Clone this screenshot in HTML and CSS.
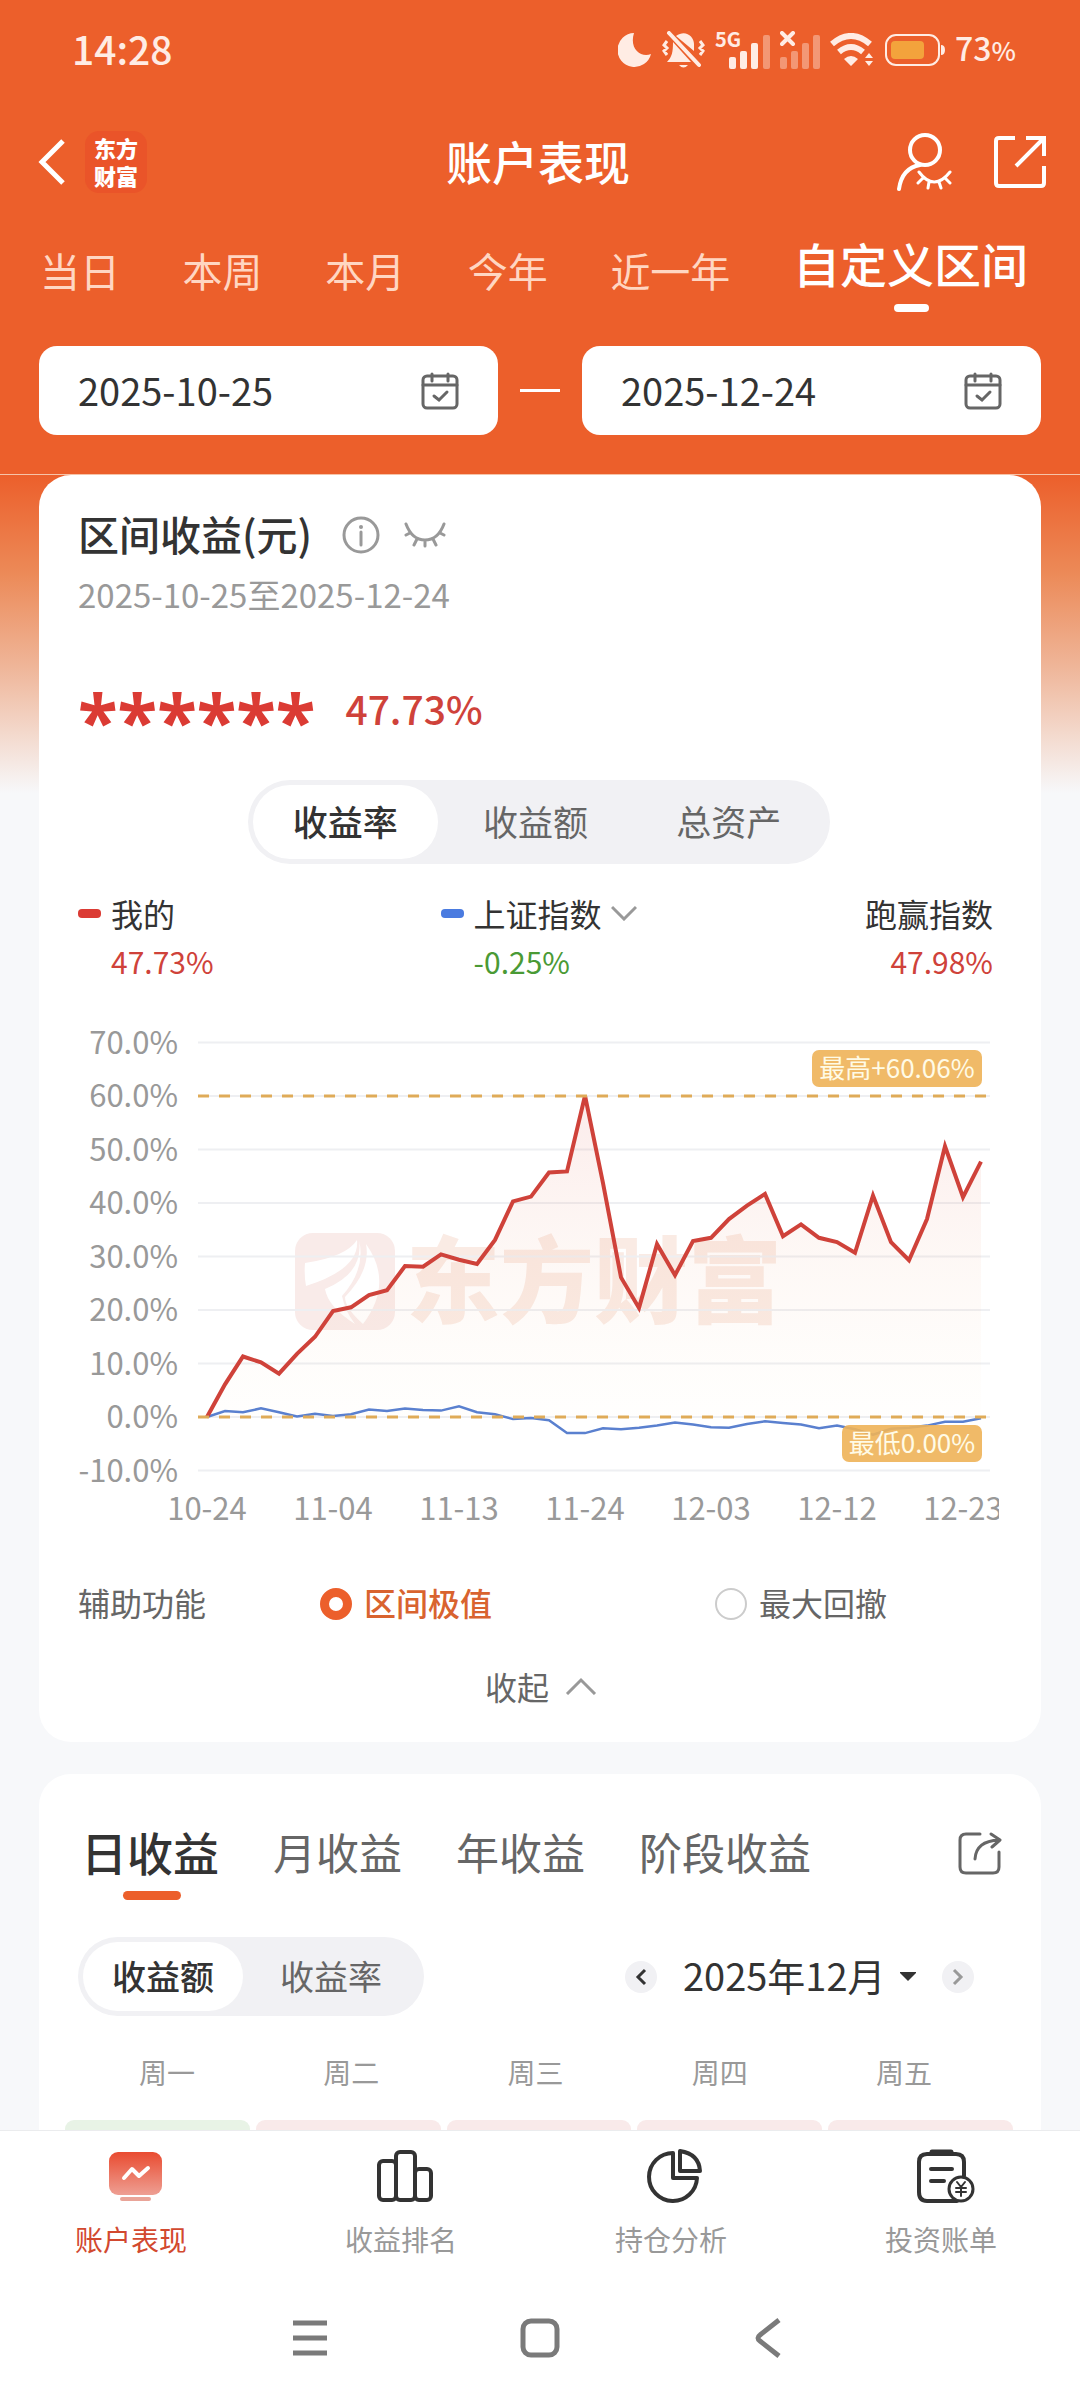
FILE: index.html
```html
<!DOCTYPE html>
<html lang="zh-CN">
  <head>
    <meta charset="UTF-8" />
    <meta name="viewport" content="width=device-width, initial-scale=1" />
    <title>账户表现</title>
    <link rel="stylesheet" href="styles.css">
  </head>
  <body>
    <div class="app">
      <header class="header">
        <div class="status-bar">
          <span class="clock">14:28</span>
          <div class="status-icons">
            <svg width="34" height="36" viewBox="0 0 34 36"><path d="M16 1A17 17 0 1 0 33 22C23 26 11 17 16 1Z" fill="#ffece4"/></svg>
            <svg width="43" height="38" viewBox="0 0 43 38" fill="#ffece4">
              <path d="M14 5C23-2 32 5 32 13V20ZM11 11L29 31H5C10 26 11 21 11 11ZM17 34h9q-4.500 5-9 0Z"/>
              <path d="M7 2L37 34" stroke="#ffece4" stroke-width="4" stroke-linecap="round"/>
              <path d="M5 10l-3 4 3 3-3 3 3 4M38 10l3 4-3 3 3 3-3 4" fill="none" stroke="#ffece4" stroke-width="3"/>
            </svg>
            <svg class="signal" width="55" height="38" viewBox="0 0 55 38" fill="#ffece4">
              <text x="0" y="16" class="net-label">5G</text>
              <rect x="14" y="26" width="7" height="12" rx="2"/><rect x="25" y="20" width="7" height="18" rx="2"/><rect x="36" y="12" width="7" height="26" rx="2"/><rect x="48" y="4" width="7" height="34" rx="2" opacity=".4"/>
            </svg>
            <svg width="40" height="38" viewBox="0 0 40 38" fill="#ffece4">
              <path d="M2 2l11 11M13 2L2 13" stroke="#ffece4" stroke-width="4" stroke-linecap="round"/>
              <g opacity=".4"><rect y="26" width="7" height="12" rx="2"/><rect x="11" y="20" width="7" height="18" rx="2"/><rect x="22" y="12" width="7" height="26" rx="2"/><rect x="33" y="4" width="7" height="34" rx="2"/></g>
            </svg>
            <svg width="45" height="34" viewBox="0 0 45 34">
              <path d="M2 11Q21-5 40 11M9 19Q21 9 33 19" fill="none" stroke="#ffece4" stroke-width="6"/>
              <path d="M14 26q7-6 14 0l-7 7ZM35 25l4-5 4 5ZM35 28h8l-4 5Z" fill="#ffece4"/>
            </svg>
            <svg width="60" height="32" viewBox="0 0 60 32">
              <rect x="1" y="1" width="53" height="30" rx="10" fill="none" stroke="#ffece4" stroke-width="2"/>
              <rect x="6" y="7" width="33" height="18" rx="4" fill="#f3a33c"/>
              <path d="M56 11q4 0 4 5t-4 5Z" fill="#ffece4"/>
            </svg>
            <span class="battery-text">73<small>%</small></span>
          </div>
        </div>

        <div class="title-bar">
          <div class="title-side">
            <button class="icon-btn" aria-label="返回">
              <svg width="28" height="46" viewBox="0 0 28 46"><path d="M25 2L4 23L25 44" fill="none" stroke="#fff" stroke-width="5"/></svg>
            </button>
            <span class="brand">东方<br>财富</span>
          </div>
          <h1>账户表现</h1>
          <div class="title-side title-right">
            <button class="icon-btn" aria-label="账户">
              <svg width="56" height="58" viewBox="0 0 56 58" fill="none" stroke="#fff" stroke-width="4" stroke-linecap="round">
                <circle cx="29" cy="17" r="15"/><path d="M24 32Q6 35 3 56"/>
                <path d="M23 39Q38 59 54 39M27 45l-5 5M33 49l-1 6M43 49l2 6M49 45l5 5" stroke-width="3"/>
              </svg>
            </button>
            <button class="icon-btn" aria-label="分享">
              <svg width="52" height="52" viewBox="0 0 52 52" fill="none" stroke="#fff" stroke-width="4"><path d="M21 2H5Q2 2 2 5V47Q2 50 5 50H47Q50 50 50 47V30M32 2H50V20M49 3L22 30"/></svg>
            </button>
          </div>
        </div>

        <nav class="range-tabs">
          <button>当日</button>
          <button>本周</button>
          <button>本月</button>
          <button>今年</button>
          <button>近一年</button>
          <button class="active">自定义区间</button>
        </nav>

        <div class="date-range">
          <label class="date-box">
            <input type="text" value="2025-10-25" aria-label="开始日期" />
            <svg class="cal-icon" viewBox="0 0 38 38"><use href="#calendar"/></svg>
          </label>
          <span class="dash"></span>
          <label class="date-box">
            <input type="text" value="2025-12-24" aria-label="结束日期" />
            <svg class="cal-icon" viewBox="0 0 38 38"><use href="#calendar"/></svg>
          </label>
        </div>
      </header>

      <main class="content">
        <section class="card">
          <div class="card-title">
            <h2>区间收益(元)</h2>
            <svg width="38" height="38" viewBox="0 0 38 38" fill="none" stroke="#999" stroke-width="3"><circle cx="19" cy="19" r="17"/><path d="M19 16V29" stroke-linecap="round"/><circle cx="19" cy="11" r="2" fill="#999" stroke="none"/></svg>
            <svg width="42" height="26" viewBox="0 0 42 26" fill="none" stroke="#999" stroke-width="3" stroke-linecap="round"><path d="M2 2Q8 18 21 18T40 2M6 11l-4 2M36 11l4 2M13 17l-3 6M21 19v5M29 17l3 6"/></svg>
          </div>
          <p class="period">2025-10-25至2025-12-24</p>
          <div class="amount"><span class="stars">******</span><span class="rate">47.73%</span></div>

          <div class="segment segment-wide">
            <button class="active">收益率</button>
            <button>收益额</button>
            <button>总资产</button>
          </div>

          <div class="legend">
            <div class="legend-item">
              <i class="mark mark-red"></i><span>我的</span>
              <b class="up">47.73%</b>
            </div>
            <div class="legend-item">
              <i class="mark mark-blue"></i>
              <span class="index-picker">
                <select aria-label="对比指数"><option>上证指数</option></select>
                <svg width="26" height="16" viewBox="0 0 26 16"><path d="M1 2L13 14L25 2" fill="none" stroke="#999" stroke-width="3"/></svg>
              </span>
              <b class="down">-0.25%</b>
            </div>
            <div class="legend-item legend-right">
              <span>跑赢指数</span>
              <b class="up">47.98%</b>
            </div>
          </div>

          <svg class="chart" viewBox="0 0 921 533" role="img" aria-label="收益率走势">
            <defs>
              <linearGradient id="area" x1="0" y1="88" x2="0" y2="410" gradientUnits="userSpaceOnUse">
                <stop offset="0" stop-color="#db3b34" stop-opacity=".1"/>
                <stop offset="1" stop-color="#f0b864" stop-opacity=".01"/>
              </linearGradient>
            </defs>
            <g class="watermark">
              <rect x="217" y="226" width="100" height="97" rx="18" fill="#f9ebe9"/>
              <path d="M227 256Q268 250 279 233Q282 262 228 279Q226 268 227 256ZM247 282Q286 266 281 233Q288 262 264 289Q267 304 277 317Q250 300 247 282ZM288 237Q316 276 285 317Q267 301 267 290Q293 263 288 237Z" fill="#fff"/>
              <text x="328" y="309">东方财富</text>
            </g>
            <g id="grid"></g>
            <path id="fill" fill="url(#area)"/>
            <polyline id="index-line" fill="none" stroke="#5a80cf" stroke-width="2.5"/>
            <polyline id="mine-line" fill="none" stroke="#cf423a" stroke-width="4"/>
            <g id="extremes"></g>
          </svg>

          <div class="aux">
            <span>辅助功能</span>
            <label class="picked"><input type="radio" name="aux" checked /><span>区间极值</span></label>
            <label><input type="radio" name="aux" /><span>最大回撤</span></label>
          </div>

          <button class="collapse">收起
            <svg width="32" height="18" viewBox="0 0 32 18"><path d="M2 17L16 3L30 17" fill="none" stroke="#999" stroke-width="3"/></svg>
          </button>
        </section>

        <section class="card">
          <div class="profit-tabs">
            <button class="active">日收益</button>
            <button>月收益</button>
            <button>年收益</button>
            <button>阶段收益</button>
            <button class="icon-btn share" aria-label="分享收益">
              <svg width="44" height="44" viewBox="0 0 44 44" fill="none" stroke="#666" stroke-width="3" stroke-linecap="round" stroke-linejoin="round"><path d="M22 3H8Q2 3 2 9V36Q2 42 8 42H35Q41 42 41 36V21M17 28Q18 10 41 9M33 3L42 9L34 16"/></svg>
            </button>
          </div>

          <div class="month-row">
            <div class="segment">
              <button class="active">收益额</button>
              <button>收益率</button>
            </div>
            <div class="month">
              <button class="round" aria-label="上个月"><svg width="12" height="18" viewBox="0 0 12 18"><path d="M10 2L3 9L10 16" fill="none" stroke="#333" stroke-width="3"/></svg></button>
              <span class="month-picker">
                <select aria-label="月份"><option>2025年12月</option></select>
                <svg width="16" height="9" viewBox="0 0 16 9"><path d="M0 0H16V1L8 9L0 1Z" fill="#333"/></svg>
              </span>
              <button class="round" aria-label="下个月"><svg width="12" height="18" viewBox="0 0 12 18"><path d="M2 2L9 9L2 16" fill="none" stroke="#999" stroke-width="3"/></svg></button>
            </div>
          </div>

          <div class="weekdays"><span>周一</span><span>周二</span><span>周三</span><span>周四</span><span>周五</span></div>
          <div class="days"><i class="loss"></i><i></i><i></i><i></i><i></i></div>
        </section>
      </main>

      <footer class="footer">
        <nav class="tab-bar">
          <a href="#" class="active">
            <svg viewBox="0 0 60 60">
              <defs><linearGradient id="tab" x1="0" y1="0" x2="0" y2="1"><stop offset="0" stop-color="#e94b30"/><stop offset="1" stop-color="#ee9f93"/></linearGradient></defs>
              <rect x="4" y="5" width="53" height="43" rx="9" fill="url(#tab)"/>
              <rect x="15" y="50" width="31" height="4" rx="2" fill="#e9a498"/>
              <path d="M19 31L27 22L34 29L43 21" fill="none" stroke="#fff" stroke-width="4" stroke-linecap="round" stroke-linejoin="round"/>
            </svg>
            <span>账户表现</span>
          </a>
          <a href="#">
            <svg viewBox="0 0 60 60" fill="none" stroke="#333" stroke-width="4"><rect x="4" y="14" width="17" height="39" rx="4"/><rect x="21" y="5" width="19" height="48" rx="4"/><rect x="40" y="22" width="16" height="31" rx="4"/></svg>
            <span>收益排名</span>
          </a>
          <a href="#">
            <svg viewBox="0 0 60 60" fill="none" stroke="#333" stroke-width="4" stroke-linejoin="round"><path d="M28 6A24 24 0 1 0 52 31H28Z"/><path d="M35 4V24H55Q54 7 35 4Z"/></svg>
            <span>持仓分析</span>
          </a>
          <a href="#">
            <svg viewBox="0 0 60 60" fill="none" stroke="#333" stroke-width="4" stroke-linecap="round">
              <path d="M49 29V15Q49 7 41 7H12Q4 7 4 15V45Q4 54 12 54H42"/><path d="M17 5H36" stroke-width="5"/><path d="M16 22H37M16 34H29"/>
              <circle cx="46" cy="42" r="12" fill="#fff" stroke-width="3"/><path d="M42 35L46 40L50 35M46 40V49M41 41H51M41 45H51" stroke-width="2"/>
            </svg>
            <span>投资账单</span>
          </a>
        </nav>
        <div class="system-bar">
          <button class="icon-btn" aria-label="最近任务"><svg width="40" height="40" viewBox="0 0 40 40"><path d="M3 5H37M3 20H37M3 35H37" stroke="#7a7a7a" stroke-width="5"/></svg></button>
          <button class="icon-btn" aria-label="主屏幕"><svg width="40" height="40" viewBox="0 0 40 40"><rect x="3" y="3" width="34" height="34" rx="8" fill="none" stroke="#7a7a7a" stroke-width="5"/></svg></button>
          <button class="icon-btn" aria-label="返回上一级"><svg width="40" height="40" viewBox="0 0 40 40"><path d="M29 2L10 17Q6 20 10 23L29 38" fill="none" stroke="#7a7a7a" stroke-width="5"/></svg></button>
        </div>
      </footer>
    </div>

    <svg class="symbols">
      <symbol id="calendar" viewBox="0 0 38 38">
        <g fill="none" stroke="#666" stroke-width="3" stroke-linecap="round"><rect x="2" y="4" width="34" height="32" rx="4"/><path d="M2 13H36M11 2V9M27 2V9M13 24L18 28L26 20"/></g>
      </symbol>
    </svg>

    <script>
      const mine = [0, 6.1, 11.3, 10.2, 8.1, 11.8, 15, 19.8, 20.5, 22.8, 23.7, 28.2, 28.1, 30.4, 29.4, 28.6, 33.1, 40.3, 41.2, 45.7, 45.9, 60.06, 43.7, 26.1, 20.4, 32.3, 26.5, 32.9, 33.5, 37, 39.5, 41.7, 33.8, 36, 33.5, 32.7, 30.7, 41.4, 32.7, 29.3, 37, 50.6, 41.1, 47.73];
      const index = [0, 1.1, 0.9, 1.6, 0.9, 0.1, 0.6, 0.2, 0.5, 1.4, 1.1, 1.6, 1.3, 1.2, 2, 0.9, 0.5, -0.4, -0.2, -0.6, -3, -3, -2.1, -2.3, -2, -1.6, -1, -1.4, -1.9, -2, -1.3, -0.8, -1.1, -1.4, -2.1, -1.6, -2.3, -3.3, -2.2, -2, -1.6, -0.9, -0.9, -0.25];
      const dates = ["10-24", "11-04", "11-13", "11-24", "12-03", "12-12", "12-23"];

      const x = i => 129 + i * 18;
      const y = v => Math.round((410 - v * 5.35) * 10) / 10;
      const points = list => list.map((v, i) => x(i) + "," + y(v)).join(" ");

      let grid = "";
      for (let v = 70; v >= -10; v -= 10) {
        grid += `<path d="M120 ${y(v)}H912" stroke="#eeeff2" stroke-width="2"/>`;
        grid += `<text class="axis" x="100" y="${y(v) + 11}" text-anchor="end">${v.toFixed(1)}%</text>`;
      }
      dates.forEach((d, i) => {
        grid += `<text class="axis" x="${129 + i * 126}" y="513" text-anchor="middle">${d}</text>`;
      });
      document.getElementById("grid").innerHTML = grid;

      document.getElementById("mine-line").setAttribute("points", points(mine));
      document.getElementById("index-line").setAttribute("points", points(index));
      document.getElementById("fill").setAttribute("d", `M${x(0)},${y(0)} L${points(mine)} L${x(43)},${y(0)}Z`);

      // dashed lines and tags for the highest and lowest values
      const tag = (left, top, width, text) =>
        `<rect x="${left}" y="${top}" width="${width}" height="37" rx="7" fill="#eeb258" opacity=".9"/>` +
        `<text class="tag" x="${left + width / 2}" y="${top + 28}" text-anchor="middle">${text}</text>`;
      document.getElementById("extremes").innerHTML =
        `<path d="M120 ${y(60)}H908M120 ${y(0)}H908" stroke="#dfab58" stroke-width="3" stroke-dasharray="11 10"/>` +
        tag(734, 43, 170, "最高+60.06%") + tag(764, 418, 140, "最低0.00%");
    </script>
  </body>
</html>
```
FILE: styles.css
```css
* {
  box-sizing: border-box;
}
body {
  margin: 0;
  font-family: "Noto Sans CJK SC", sans-serif;
  font-size: 32px;
  line-height: 48px;
  color: #333;
  background: #f7f8fa;
}
button, input, select {
  font: inherit;
  color: inherit;
  background: none;
  border: none;
  padding: 0;
  margin: 0;
  appearance: none;
  white-space: nowrap;
}
button {
  cursor: pointer;
}
input:focus, select:focus {
  outline: none;
}
h1, h2, p {
  margin: 0;
}
svg {
  display: block;
  flex: none;
}
.symbols {
  position: absolute;
  width: 0;
  height: 0;
}
.app {
  display: flex;
  flex-direction: column;
  height: 100vh;
}
.icon-btn {
  display: flex;
}

/* header */
.header {
  flex: none;
  background: #ec5f2b;
  color: #fff;
  border-bottom: 1px solid #f6c3a8;
}
.status-bar {
  display: flex;
  justify-content: space-between;
  align-items: center;
  height: 100px;
  padding: 0 64px 0 72px;
  color: #ffece4;
}
.clock {
  padding-bottom: 4px;
  font-size: 39px;
  font-weight: 500;
}
.status-icons {
  display: flex;
  align-items: center;
  gap: 10px;
}
.signal {
  overflow: visible;
}
.net-label {
  font-size: 20px;
  font-weight: 700;
}
.battery-text {
  padding-bottom: 3px;
  font-size: 32px;
  font-weight: 500;
}
.battery-text small {
  font-size: 26px;
}
.title-bar {
  display: flex;
  align-items: center;
  height: 124px;
  padding: 0 34px 0 38px;
}
.title-side {
  display: flex;
  align-items: center;
  flex: 1;
  gap: 19px;
}
.title-right {
  justify-content: flex-end;
  gap: 42px;
}
.brand {
  width: 62px;
  padding: 2px 0 4px;
  border-radius: 14px;
  background: #ea5429;
  font-size: 22px;
  font-weight: 900;
  line-height: 28px;
  text-align: center;
}
h1 {
  margin-right: 8px;
  padding-bottom: 4px;
  font-size: 46px;
  font-weight: 500;
  line-height: 60px;
}
.range-tabs {
  display: flex;
  justify-content: space-between;
  align-items: center;
  height: 92px;
  padding: 0 52px 0 40px;
  font-size: 40px;
  color: #ffd6c2;
}
.range-tabs .active {
  position: relative;
  padding-bottom: 14px;
  font-size: 47px;
  font-weight: 500;
  color: #fff;
}
.range-tabs .active::after {
  content: "";
  position: absolute;
  left: 50%;
  bottom: -11px;
  width: 35px;
  height: 8px;
  margin-left: -16px;
  border-radius: 4px;
  background: #fff;
}
.date-range {
  display: flex;
  align-items: center;
  gap: 22px;
  padding: 30px 39px 39px;
}
.date-box {
  display: flex;
  align-items: center;
  flex: 1;
  min-width: 0;
  height: 89px;
  padding: 0 39px;
  border-radius: 18px;
  background: #fff;
  color: #333;
}
.date-box input {
  flex: 1;
  min-width: 0;
  padding-bottom: 2px;
  font-size: 38px;
}
.cal-icon {
  width: 38px;
  height: 38px;
}
.dash {
  width: 40px;
  height: 3px;
  background: #fff;
}

/* cards */
.content {
  flex: 1;
  min-height: 0;
  overflow: hidden;
  padding: 0 39px;
  background: linear-gradient(#ec5f2b, #ec8a58 31%, #efb598 60%, #f7f8fa) 0 0 / 100% 318px no-repeat;
}
.card {
  padding: 36px 42px 30px 39px;
  border-radius: 32px;
  background: #fff;
}
.card + .card {
  margin-top: 32px;
  padding-top: 49px;
}
.card-title {
  display: flex;
  align-items: center;
  gap: 24px;
  height: 48px;
}
.card-title h2 {
  margin-right: 6px;
  padding-bottom: 4px;
  font-size: 41px;
  font-weight: 500;
  line-height: 48px;
}
.period {
  margin-top: 11px;
  font-size: 33px;
  color: #999;
}
.amount {
  display: flex;
  align-items: center;
  height: 60px;
  margin-top: 62px;
  color: #cf423a;
}
.stars {
  padding-top: 20px;
  font-family: "Noto Sans", sans-serif;
  font-size: 73px;
  font-weight: 700;
  color: #db3b34;
}
.rate {
  margin-left: 30px;
  padding-bottom: 4px;
  font-size: 39px;
  font-weight: 500;
}
.segment {
  display: flex;
  padding: 5px;
  border-radius: 42px;
  background: #f1f1f4;
  color: #666;
}
.segment button {
  height: 69px;
  padding: 0 29px 2px;
  border-radius: 37px;
  font-size: 34px;
}
.segment button:last-child {
  padding: 0 37px 2px;
}
.segment .active {
  background: #fff;
  color: #333;
  font-weight: 500;
}
.segment-wide {
  width: 582px;
  max-width: 100%;
  margin: 40px auto 0;
  padding: 5px 0;
}
.segment-wide button {
  flex: 1;
  height: 74px;
  font-size: 35px;
}
.segment-wide .active {
  margin: 0 5px;
}
.legend {
  display: grid;
  grid-template-columns: 365fr 270fr 286fr;
  margin-top: 25px;
  padding-right: 6px;
}
.legend-item {
  display: grid;
  grid-template-columns: 33px auto;
  justify-content: start;
  align-items: center;
}
.legend-item b {
  grid-column: 2;
  font-size: 30px;
  font-weight: 400;
}
.legend-right {
  grid-template-columns: auto;
  justify-content: end;
  text-align: right;
}
.legend-right b {
  grid-column: 1;
}
.mark {
  width: 23px;
  height: 9px;
  border-radius: 4px;
}
.mark-red {
  background: #db3b34;
}
.mark-blue {
  background: #4a7be0;
}
.index-picker {
  display: flex;
  align-items: center;
  gap: 8px;
}
.up {
  color: #cf423a;
}
.down {
  color: #4a9a35;
}
.chart {
  width: 100%;
  margin-top: 22px;
}
.watermark text {
  font-size: 94px;
  font-weight: 900;
  fill: #faebe4;
}
.axis {
  font-size: 31px;
  fill: #999;
}
.tag {
  font-size: 26px;
  fill: #fffbe6;
}
.aux {
  display: grid;
  grid-template-columns: 242fr 395fr 284fr;
  align-items: center;
  height: 48px;
  margin-top: 38px;
  color: #666;
}
.aux label {
  display: flex;
  align-items: center;
  gap: 12px;
}
.aux span {
  padding-bottom: 4px;
}
.aux input {
  width: 32px;
  height: 32px;
  border: 2px solid #ccc;
  border-radius: 50%;
}
.aux input:checked {
  border: 9px solid #ec5f2b;
}
.aux .picked {
  color: #d9632f;
  font-weight: 500;
}
.collapse {
  display: flex;
  align-items: center;
  gap: 16px;
  margin: 36px auto 2px;
  padding-left: 5px;
  color: #666;
}

/* daily profit */
.profit-tabs {
  display: flex;
  align-items: center;
  gap: 54px;
  height: 60px;
  margin-right: -3px;
  padding-left: 3px;
  font-size: 43px;
  color: #666;
}
.profit-tabs button {
  padding-bottom: 4px;
}
.profit-tabs .active {
  position: relative;
  font-size: 46px;
  font-weight: 500;
  color: #333;
}
.profit-tabs .active::after {
  content: "";
  position: absolute;
  left: 50%;
  bottom: -21px;
  width: 58px;
  height: 9px;
  margin-left: -27px;
  border-radius: 5px;
  background: #ec5f2b;
}
.profit-tabs .share {
  margin-left: auto;
  padding: 0;
}
.month-row {
  display: flex;
  justify-content: space-between;
  align-items: center;
  margin-top: 54px;
  padding-right: 25px;
}
.month {
  display: flex;
  align-items: center;
  gap: 26px;
}
.month-picker {
  display: flex;
  align-items: center;
  gap: 14px;
}
.month-picker select {
  padding-bottom: 4px;
  font-size: 38px;
}
.round {
  display: flex;
  align-items: center;
  justify-content: center;
  width: 32px;
  height: 32px;
  border-radius: 50%;
  background: #f1f1f4;
}
.weekdays, .days {
  display: grid;
  grid-template-columns: repeat(5, 1fr);
}
.weekdays {
  margin: 32px 3px 0 -3px;
  font-size: 28px;
  text-align: center;
  color: #999;
}
.days {
  gap: 6px;
  margin: 24px -14px 0 -13px;
}
.days i {
  height: 120px;
  border-radius: 9px;
  background: #f9eaea;
}
.days .loss {
  background: #e8f3e6;
}

/* bottom bars */
.footer {
  flex: none;
  background: #fff;
  border-top: 1px solid #ebecee;
}
.tab-bar {
  display: grid;
  grid-template-columns: repeat(4, 1fr);
  padding-top: 16px;
}
.tab-bar a {
  display: flex;
  flex-direction: column;
  align-items: center;
  gap: 8px;
  font-size: 28px;
  color: #999;
  text-decoration: none;
}
.tab-bar svg {
  width: 60px;
  height: 60px;
}
.tab-bar span {
  padding-right: 8px;
}
.tab-bar .active {
  color: #d2492f;
}
.system-bar {
  display: flex;
  justify-content: center;
  gap: 190px;
  padding: 55px 0 42px;
}
```
